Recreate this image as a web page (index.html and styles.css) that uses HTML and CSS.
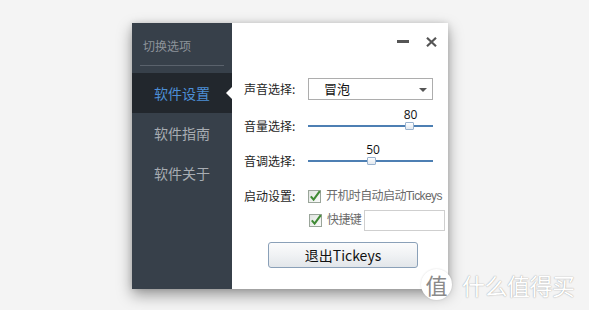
FILE: index.html
```html
<!DOCTYPE html>
<html lang="zh-CN">
<head>
<meta charset="utf-8">
<title>Tickeys 设置</title>
<link rel="stylesheet" href="styles.css">
</head>
<body>
<div class="stage">
  <div class="window">
    <aside class="sidebar">
      <div class="side-title">切换选项</div>
      <div class="side-divider"></div>
      <nav class="side-nav">
        <div class="side-item active">软件设置</div>
        <div class="side-item">软件指南</div>
        <div class="side-item">软件关于</div>
      </nav>
    </aside>
    <main class="content">
      <div class="titlebar">
        <span class="btn-min"></span>
        <svg class="btn-close" width="11" height="10" viewBox="0 0 11 10"><path d="M1 0.8 L10 9.2 M10 0.8 L1 9.2" stroke="#555" stroke-width="2.2"/></svg>
      </div>
      <div class="row row-sound">
        <span class="label">声音选择:</span>
        <div class="select">
          <span class="select-text">冒泡</span>
          <span class="select-arrow"></span>
        </div>
      </div>
      <div class="row row-vol">
        <span class="label">音量选择:</span>
        <div class="slider">
          <div class="track"></div>
          <span class="thumb" style="left: 81%"></span>
          <span class="value" style="left: 82%">80</span>
        </div>
      </div>
      <div class="row row-pitch">
        <span class="label">音调选择:</span>
        <div class="slider">
          <div class="track"></div>
          <span class="thumb" style="left: 50.5%"></span>
          <span class="value" style="left: 52%">50</span>
        </div>
      </div>
      <div class="row row-start">
        <span class="label">启动设置:</span>
        <label class="check">
          <svg class="box" width="14" height="14" viewBox="0 0 14 14"><defs><linearGradient id="cb1" x1="0" y1="0" x2="1" y2="1"><stop offset="0" stop-color="#dfe3df"/><stop offset="1" stop-color="#fbfcfb"/></linearGradient></defs><rect x="0.5" y="1.5" width="12" height="12" fill="url(#cb1)" stroke="#9aa59a"/><path d="M2.8 7.4 L5.6 10.6 L11.8 2.2" fill="none" stroke="#3f8a34" stroke-width="2.1"/></svg>
          <span class="check-text">开机时自动启动Tickeys</span>
        </label>
      </div>
      <div class="row row-hotkey">
        <label class="check">
          <svg class="box" width="14" height="14" viewBox="0 0 14 14"><defs><linearGradient id="cb2" x1="0" y1="0" x2="1" y2="1"><stop offset="0" stop-color="#dfe3df"/><stop offset="1" stop-color="#fbfcfb"/></linearGradient></defs><rect x="0.5" y="1.5" width="12" height="12" fill="url(#cb2)" stroke="#9aa59a"/><path d="M2.8 7.4 L5.6 10.6 L11.8 2.2" fill="none" stroke="#3f8a34" stroke-width="2.1"/></svg>
          <span class="check-text">快捷键</span>
        </label>
        <div class="hotkey-input"></div>
      </div>
      <div class="row row-btn">
        <button class="exit-btn">退出Tickeys</button>
      </div>
    </main>
    <div class="watermark">
      <span class="wm-logo">值</span>
      <span class="wm-text">什么值得买</span>
    </div>
  </div>
</div>
</body>
</html>
```

FILE: styles.css
```css
* { box-sizing: border-box; }
html, body { margin: 0; padding: 0; }
body {
  background: #f4f4f4;
  font-family: "Noto Sans CJK SC", "Noto Sans", sans-serif;
  width: 589px;
  height: 310px;
  overflow: hidden;
}
.stage {
  padding-top: 23px;
  padding-left: 132px;
}
.window {
  position: relative;
  display: flex;
  width: 316px;
  height: 266px;
  box-shadow: 0 6px 14px rgba(0,0,0,0.38), 0 0 6px rgba(0,0,0,0.12);
}
.sidebar {
  width: 100px;
  background: #37404a;
  display: flex;
  flex-direction: column;
}
.side-title {
  margin-top: 15px;
  margin-left: 11px;
  font-size: 12px;
  line-height: 16px;
  color: #8d939a;
}
.side-divider {
  margin: 11px 0 0 8px;
  width: 84px;
  height: 1px;
  background: #5a626c;
}
.side-nav { margin-top: 7px; }
.side-item {
  position: relative;
  height: 40px;
  line-height: 40px;
  padding-left: 22px;
  font-size: 14px;
  color: #a8adb3;
}
.side-item.active {
  background: #22272d;
  color: #4d8fd6;
}
.side-item.active::after {
  content: "";
  position: absolute;
  right: 0;
  top: 14px;
  border-style: solid;
  border-width: 6px 6px 6px 0;
  border-color: transparent #ffffff transparent transparent;
}
.content {
  width: 216px;
  background: #ffffff;
  padding-left: 12px;
  display: flex;
  flex-direction: column;
}
.titlebar {
  height: 55px;
  display: flex;
  justify-content: flex-end;
  align-items: flex-start;
  padding-top: 14px;
  padding-right: 11px;
}
.btn-min {
  width: 12px;
  height: 3px;
  background: #555;
  margin-top: 3px;
  margin-right: 17px;
}
.btn-close { display: block; }
.row {
  display: flex;
  align-items: center;
}
.label {
  width: 64px;
  font-size: 12px;
  line-height: 16px;
  color: #1e1e1e;
  flex: none;
}
.row-sound { height: 22px; }
.select {
  position: relative;
  width: 125px;
  height: 22px;
  border: 1px solid #adadad;
  background: #fff;
  display: flex;
  align-items: center;
}
.select-text {
  padding-left: 15px;
  font-size: 13px;
  line-height: 16px;
  color: #111;
}
.select-arrow {
  position: absolute;
  right: 5px;
  top: 9px;
  border-style: solid;
  border-width: 4px 4px 0 4px;
  border-color: #555 transparent transparent transparent;
}
.row-vol { height: 20px; margin-top: 16px; }
.row-pitch { height: 20px; margin-top: 15px; }
.slider {
  position: relative;
  width: 125px;
  height: 10px;
}
.track {
  position: absolute;
  left: 0;
  right: 0;
  top: 4px;
  height: 2px;
  background: #4d7fb3;
}
.thumb {
  position: absolute;
  top: 1px;
  width: 9px;
  height: 8px;
  margin-left: -4.5px;
  border: 1px solid #9ab3cf;
  border-radius: 1px;
  background: linear-gradient(#ffffff, #e3e9f0);
}
.value {
  position: absolute;
  bottom: 9px;
  transform: translateX(-50%);
  font-family: "Open Sans", "Liberation Sans", sans-serif;
  font-size: 12px;
  line-height: 14px;
  color: #111;
}
.row-start { height: 20px; margin-top: 15px; }
.check {
  display: flex;
  align-items: center;
}
.box { display: block; flex: none; }
.check-text {
  margin-left: 4px;
  font-family: "Liberation Sans", "Noto Sans CJK SC", sans-serif;
  font-size: 12px;
  line-height: 16px;
  color: #6a6a6a;
  letter-spacing: -0.6px;
  white-space: nowrap;
}
.row-hotkey {
  height: 22px;
  margin-top: 3px;
  padding-left: 65px;
}
.hotkey-input {
  width: 81px;
  height: 21px;
  margin-left: 3px;
  border: 1px solid #cfcfcf;
  background: #fff;
}
.row-btn { margin-top: 11px; padding-left: 24px; }
.exit-btn {
  width: 150px;
  height: 26px;
  border: 1px solid #8aa0b8;
  border-radius: 3px;
  background: linear-gradient(#fbfbfc 0%, #f0f2f4 50%, #e2e6ea 100%);
  font-family: "Noto Sans CJK SC", "Noto Sans", sans-serif;
  font-size: 14px;
  line-height: 18px;
  color: #111;
  padding: 0;
}
.watermark {
  position: absolute;
  left: 289px;
  top: 246px;
  display: flex;
  align-items: center;
}
.wm-logo {
  width: 31px;
  height: 31px;
  border-radius: 50%;
  background: #ffffff;
  box-shadow: 0 0 2px rgba(0,0,0,0.15);
  color: #8a8a8a;
  font-size: 22px;
  line-height: 31px;
  text-align: center;
  font-family: "Noto Sans CJK SC", sans-serif;
}
.wm-text {
  margin-left: 10px;
  font-size: 23px;
  line-height: 28px;
  color: #ffffff;
  letter-spacing: -0.5px;
  text-shadow: 0 0 1px rgba(0,0,0,0.35), 0 0 2px rgba(0,0,0,0.12);
  font-family: "Noto Sans CJK SC", sans-serif;
  white-space: nowrap;
}
```
